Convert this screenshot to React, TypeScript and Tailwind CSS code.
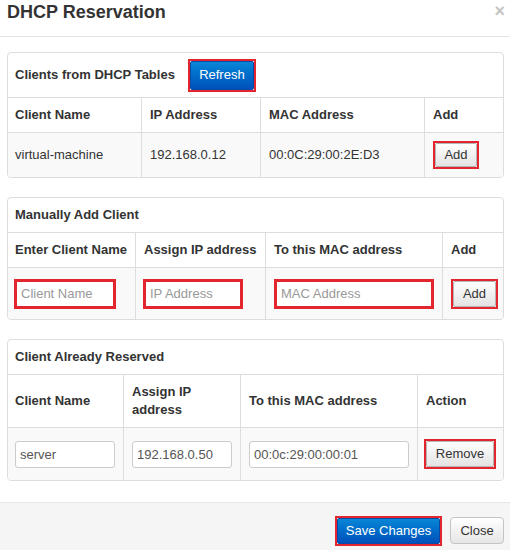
import React from "react";

const RED = "border-[#e3262e]";

function DefaultBtn({ label }: { label: string }) {
  return (
    <span className="flex h-full w-full items-center justify-center rounded-[2px] border border-[#b5b5b5] bg-linear-to-b from-[#ffffff] to-[#e3e3e3] text-[13px] text-[#333]">
      {label}
    </span>
  );
}

function BlueBtn({ label }: { label: string }) {
  return (
    <span className="flex h-full w-full items-center justify-center rounded-[2px] border border-[#0a49a8] bg-linear-to-b from-[#0a86d6] to-[#0150bb] text-[13px] text-white">
      {label}
    </span>
  );
}

export default function App() {
  return (
    <div className="relative h-[550px] w-[510px] overflow-hidden bg-white font-['Liberation_Sans',Arial,Helvetica,sans-serif] text-[13px] leading-[18px] text-[#333]">
      {/* Header */}
      <div className="flex h-[37px] items-start justify-between border-b border-[#e5e5e5]">
        <h4 className="pl-[7px] pt-[2px] text-[18px] font-bold leading-[20px] text-[#333]">DHCP Reservation</h4>
        <span className="pr-[5px] pt-[1px] text-[18px] font-bold leading-[20px] text-[#c4c4c4]">×</span>
      </div>

      {/* Body */}
      <div className="pl-[7px] pt-[15px] pb-[21px]">
        {/* Panel 1 */}
        <div className="mb-[19px] w-[497px] overflow-hidden rounded-[4px] border border-[#ddd]">
          <div className="flex h-[44px] items-center pl-[7px] font-bold">
            <span>Clients from DHCP Tables</span>
            <span className={`ml-[13px] flex h-[33px] w-[68px] border-2 ${RED} font-normal`}>
              <BlueBtn label="Refresh" />
            </span>
          </div>
          <div className="grid h-[35px] grid-cols-[133px_119px_164px_1fr] border-t border-[#ddd] font-bold">
            <div className="flex items-center pl-[7px]">Client Name</div>
            <div className="flex items-center border-l border-[#ddd] pl-[8px]">IP Address</div>
            <div className="flex items-center border-l border-[#ddd] pl-[8px]">MAC Address</div>
            <div className="flex items-center border-l border-[#ddd] pl-[8px]">Add</div>
          </div>
          <div className="grid h-[45px] grid-cols-[133px_119px_164px_1fr] border-t border-[#ddd] bg-[#f9f9f9]">
            <div className="flex items-center pl-[7px]">virtual-machine</div>
            <div className="flex items-center border-l border-[#ddd] pl-[8px]">192.168.0.12</div>
            <div className="flex items-center border-l border-[#ddd] pl-[8px]">00:0C:29:00:2E:D3</div>
            <div className="flex items-center border-l border-[#ddd] pl-[8px]">
              <span className={`flex h-[28px] w-[46px] border-2 ${RED}`}>
                <DefaultBtn label="Add" />
              </span>
            </div>
          </div>
        </div>

        {/* Panel 2 */}
        <div className="mb-[19px] w-[497px] overflow-hidden rounded-[4px] border border-[#ddd]">
          <div className="flex h-[34px] items-center pl-[7px] font-bold">Manually Add Client</div>
          <div className="grid h-[35px] grid-cols-[127px_130px_177px_1fr] border-t border-[#ddd] font-bold">
            <div className="flex items-center pl-[7px]">Enter Client Name</div>
            <div className="flex items-center border-l border-[#ddd] pl-[8px]">Assign IP address</div>
            <div className="flex items-center border-l border-[#ddd] pl-[8px]">To this MAC address</div>
            <div className="flex items-center border-l border-[#ddd] pl-[8px]">Add</div>
          </div>
          <div className="grid h-[52px] grid-cols-[127px_130px_177px_1fr] border-t border-[#ddd] bg-[#f9f9f9]">
            <div className="flex items-center pl-[6px]">
              <input
                placeholder="Client Name"
                className={`h-[30px] w-[102px] border-[3px] ${RED} bg-white pl-[4px] text-[13px] outline-none placeholder:text-[#999]`}
              />
            </div>
            <div className="flex items-center border-l border-[#ddd] pl-[7px]">
              <input
                placeholder="IP Address"
                className={`h-[30px] w-[100px] border-[3px] ${RED} bg-white pl-[4px] text-[13px] outline-none placeholder:text-[#999]`}
              />
            </div>
            <div className="flex items-center border-l border-[#ddd] pl-[8px]">
              <input
                placeholder="MAC Address"
                className={`h-[30px] w-[160px] border-[3px] ${RED} bg-white pl-[4px] text-[13px] outline-none placeholder:text-[#999]`}
              />
            </div>
            <div className="flex items-center border-l border-[#ddd] pl-[8px]">
              <span className={`flex h-[30px] w-[47px] border-2 ${RED}`}>
                <DefaultBtn label="Add" />
              </span>
            </div>
          </div>
        </div>

        {/* Panel 3 */}
        <div className="w-[497px] overflow-hidden rounded-[4px] border border-[#ddd]">
          <div className="flex h-[34px] items-center pl-[7px] font-bold">Client Already Reserved</div>
          <div className="grid h-[53px] grid-cols-[115px_117px_177px_1fr] border-t border-[#ddd] font-bold">
            <div className="flex items-center pl-[7px]">Client Name</div>
            <div className="flex items-center border-l border-[#ddd] pl-[8px] pr-[8px]">Assign IP address</div>
            <div className="flex items-center border-l border-[#ddd] pl-[8px]">To this MAC address</div>
            <div className="flex items-center border-l border-[#ddd] pl-[8px]">Action</div>
          </div>
          <div className="grid h-[53px] grid-cols-[115px_117px_177px_1fr] border-t border-[#ddd] bg-[#f9f9f9]">
            <div className="flex items-center pl-[7px]">
              <input
                defaultValue="server"
                className="h-[27px] w-[100px] rounded-[3px] border border-[#ccc] bg-white pl-[4px] text-[13px] text-[#555] outline-none"
              />
            </div>
            <div className="flex items-center border-l border-[#ddd] pl-[8px]">
              <input
                defaultValue="192.168.0.50"
                className="h-[27px] w-[100px] rounded-[3px] border border-[#ccc] bg-white pl-[4px] text-[13px] text-[#555] outline-none"
              />
            </div>
            <div className="flex items-center border-l border-[#ddd] pl-[8px]">
              <input
                defaultValue="00:0c:29:00:00:01"
                className="h-[27px] w-[160px] rounded-[3px] border border-[#ccc] bg-white pl-[4px] text-[13px] text-[#555] outline-none"
              />
            </div>
            <div className="flex items-center border-l border-[#ddd] pl-[6px]">
              <span className={`flex h-[30px] w-[72px] border-2 ${RED}`}>
                <DefaultBtn label="Remove" />
              </span>
            </div>
          </div>
        </div>
      </div>

      {/* Footer */}
      <div className="flex h-[48px] items-start justify-end gap-[8px] border-t border-[#e5e5e5] bg-[#f5f5f5] pr-[6px] pt-[13px]">
        <span className={`flex h-[30px] w-[107px] border-2 ${RED}`}>
          <BlueBtn label="Save Changes" />
        </span>
        <span className="mt-[1px] flex h-[27px] w-[54px] items-center justify-center rounded-[4px] border border-[#c5c5c5] bg-linear-to-b from-[#ffffff] to-[#e6e6e6] text-[13px] text-[#333]">
          Close
        </span>
      </div>
    </div>
  );
}
